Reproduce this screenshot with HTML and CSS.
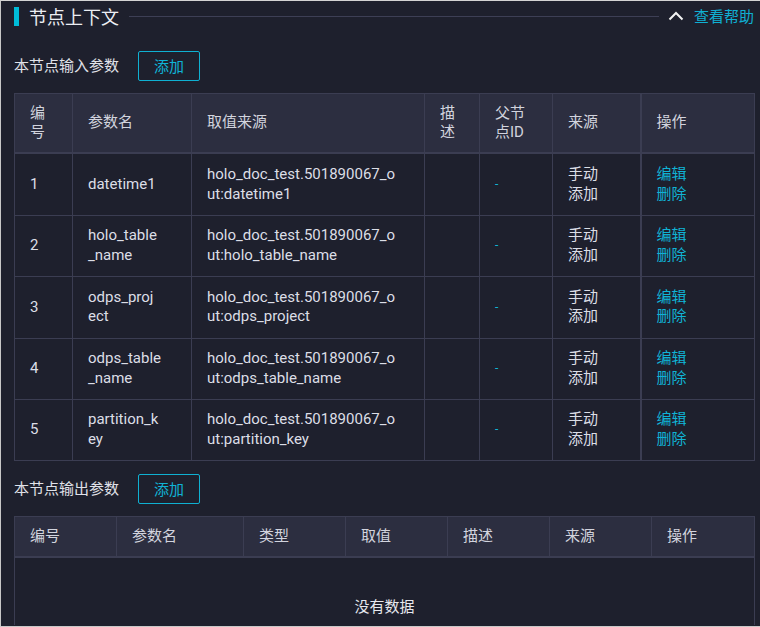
FILE: index.html
```html
<!DOCTYPE html>
<html lang="zh-CN">
<head>
<meta charset="utf-8">
<title>节点上下文</title>
<link rel="stylesheet" href="styles.css">
</head>
<body>
<div class="panel">
  <div class="title-row">
    <span class="title-bar"></span>
    <span class="title">节点上下文</span>
    <span class="title-line"></span>
    <svg class="chevron" width="16" height="10" viewBox="0 0 16 10"><polyline points="1.5,8.5 8,2 14.5,8.5" fill="none" stroke="#f2f2f2" stroke-width="2"/></svg>
    <a class="help">查看帮助</a>
  </div>

  <div class="section-head first">
    <span class="section-label">本节点输入参数</span>
    <button class="btn">添加</button>
  </div>
  <table class="grid grid-in">
    <colgroup>
      <col class="w58"><col class="w119"><col class="w233"><col class="w55"><col class="w73"><col class="w88"><col class="w114">
    </colgroup>
    <thead>
      <tr><th>编号</th><th>参数名</th><th>取值来源</th><th>描述</th><th>父节点ID</th><th>来源</th><th class="op">操作</th></tr>
    </thead>
    <tbody>
      <tr><td>1</td><td>datetime1</td><td>holo_doc_test.501890067_o<br>ut:datetime1</td><td></td><td class="dash">-</td><td>手动<br>添加</td><td class="op"><a class="link">编辑</a><br><a class="link">删除</a></td></tr>
      <tr><td>2</td><td>holo_table<br>_name</td><td>holo_doc_test.501890067_o<br>ut:holo_table_name</td><td></td><td class="dash">-</td><td>手动<br>添加</td><td class="op"><a class="link">编辑</a><br><a class="link">删除</a></td></tr>
      <tr><td>3</td><td>odps_proj<br>ect</td><td>holo_doc_test.501890067_o<br>ut:odps_project</td><td></td><td class="dash">-</td><td>手动<br>添加</td><td class="op"><a class="link">编辑</a><br><a class="link">删除</a></td></tr>
      <tr><td>4</td><td>odps_table<br>_name</td><td>holo_doc_test.501890067_o<br>ut:odps_table_name</td><td></td><td class="dash">-</td><td>手动<br>添加</td><td class="op"><a class="link">编辑</a><br><a class="link">删除</a></td></tr>
      <tr><td>5</td><td>partition_k<br>ey</td><td>holo_doc_test.501890067_o<br>ut:partition_key</td><td></td><td class="dash">-</td><td>手动<br>添加</td><td class="op"><a class="link">编辑</a><br><a class="link">删除</a></td></tr>
    </tbody>
  </table>

  <div class="section-head">
    <span class="section-label">本节点输出参数</span>
    <button class="btn">添加</button>
  </div>
  <table class="grid grid-out">
    <colgroup>
      <col class="w102"><col class="w127"><col class="w102"><col class="w102"><col class="w102"><col class="w102"><col class="w103">
    </colgroup>
    <thead>
      <tr><th>编号</th><th>参数名</th><th>类型</th><th>取值</th><th>描述</th><th>来源</th><th>操作</th></tr>
    </thead>
    <tbody>
      <tr><td class="empty" colspan="7">没有数据</td></tr>
    </tbody>
  </table>
</div>
</body>
</html>
```
FILE: styles.css
```css
html, body {
  margin: 0;
  padding: 0;
}
body {
  width: 760px;
  height: 627px;
  box-sizing: border-box;
  background: #1e202d;
  border-top: 1px solid #d4d4d4;
  border-left: 1px solid #c8c8c8;
  border-bottom: 1px solid #c8c8c8;
  overflow: hidden;
  font-family: Roboto, "Noto Sans CJK SC", sans-serif;
  font-size: 15px;
  color: #dcdee6;
}
.panel {
  padding: 0 6px 0 13px;
}
.title-row {
  display: flex;
  align-items: center;
  height: 30px;
}
.title-bar {
  width: 5px;
  height: 19px;
  background: #00bcd8;
}
.title {
  margin-left: 10px;
  font-family: "Noto Sans CJK SC", sans-serif;
  font-size: 18px;
  color: #eceef3;
  line-height: 24px;
}
.title-line {
  flex: 1;
  height: 1px;
  background: #3d3f55;
  margin: 0 9px 0 10px;
}
.chevron {
  display: block;
}
.help {
  margin-left: 10px;
  font-family: "Noto Sans CJK SC", sans-serif;
  font-size: 15px;
  color: #10afd2;
  line-height: 20px;
}
.section-head {
  display: flex;
  align-items: center;
  height: 30px;
  margin-top: 13px;
}
.section-head.first {
  margin-top: 20px;
}
.section-label {
  font-family: "Noto Sans CJK SC", sans-serif;
  font-size: 15px;
  color: #e0e2e9;
  width: 124px;
  line-height: 20px;
  margin-top: -3px;
}
.btn {
  width: 62px;
  height: 30px;
  box-sizing: border-box;
  border: 1px solid #0fb0d2;
  border-radius: 2px;
  background: transparent;
  color: #10b3d5;
  font-family: "Noto Sans CJK SC", sans-serif;
  font-size: 15px;
  padding: 0;
  line-height: 28px;
}
.grid {
  border-collapse: collapse;
  table-layout: fixed;
  width: 740px;
  margin-top: 12px;
  line-height: 19.6px;
}
.w58 { width: 58px; }
.w119 { width: 119px; }
.w233 { width: 233px; }
.w55 { width: 55px; }
.w73 { width: 73px; }
.w88 { width: 88px; }
.w114 { width: 114px; }
.w102 { width: 102px; }
.w127 { width: 127px; }
.w103 { width: 103px; }
.grid th,
.grid td {
  border: 1px solid #3b3d52;
  text-align: left;
  vertical-align: middle;
  padding: 10.6px 15px;
  font-weight: normal;
}
.grid th {
  background: #2c2e40;
  color: #d2d4de;
  padding-top: 9.6px;
  padding-bottom: 9.6px;
}
.grid thead th {
  border-bottom: 2px solid #3b3d52;
}
.grid-in th.op,
.grid-in td.op {
  border-left: 2px solid #3b3d52;
}
.grid-out th {
  padding-top: 9.7px;
  padding-bottom: 9.7px;
}
.dash {
  color: #10b3d5;
  font-size: 12px;
}
.link {
  color: #10b3d5;
}
.grid td.empty {
  text-align: center;
  vertical-align: top;
  padding-top: 40px;
  padding-bottom: 0;
  height: 27px;
  border-bottom: none;
  color: #e6e8ee;
}
```
